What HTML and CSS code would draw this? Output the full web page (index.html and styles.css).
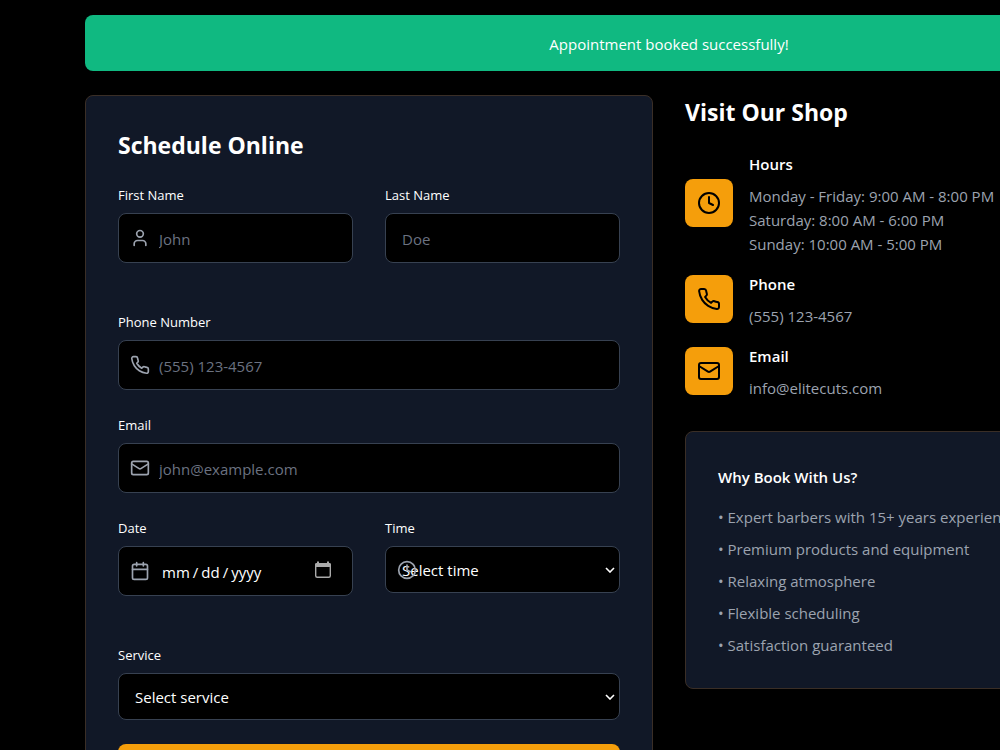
FILE: index.html
```html
<!DOCTYPE html>
<html lang="en">
<head>
<meta charset="utf-8">
<meta name="viewport" content="width=device-width, initial-scale=1">
<title>Book an Appointment</title>
<link rel="stylesheet" href="styles.css">
</head>
<body>
<svg class="sprite" aria-hidden="true">
  <symbol id="user" viewBox="0 0 24 24"><circle cx="12" cy="7" r="4"/><path d="M19 21v-2a4 4 0 0 0-4-4H9a4 4 0 0 0-4 4v2"/></symbol>
  <symbol id="phone" viewBox="0 0 24 24"><path d="M22 16.92v3a2 2 0 0 1-2.18 2 19.79 19.79 0 0 1-8.63-3.07 19.5 19.5 0 0 1-6-6 19.79 19.79 0 0 1-3.07-8.67A2 2 0 0 1 4.11 2h3a2 2 0 0 1 2 1.72 12.84 12.84 0 0 0 .7 2.81 2 2 0 0 1-.45 2.11L8.09 9.91a16 16 0 0 0 6 6l1.27-1.27a2 2 0 0 1 2.11-.45 12.84 12.84 0 0 0 2.81.7A2 2 0 0 1 22 16.92z"/></symbol>
  <symbol id="mail" viewBox="0 0 24 24"><rect x="2" y="4" width="20" height="16" rx="2"/><path d="m22 7-8.97 5.7a1.94 1.94 0 0 1-2.06 0L2 7"/></symbol>
  <symbol id="calendar" viewBox="0 0 24 24"><rect x="3" y="4" width="18" height="18" rx="2"/><path d="M8 2v4M16 2v4M3 10h18"/></symbol>
  <symbol id="clock" viewBox="0 0 24 24"><circle cx="12" cy="12" r="10"/><path d="M12 6v6l4 2"/></symbol>
</svg>
<main class="booking">
  <div class="alert" role="status">Appointment booked successfully!</div>
  <div class="columns">
    <form class="card form">
      <h2 class="title">Schedule Online</h2>
      <div class="row">
        <div class="field">
          <label class="label" for="first">First Name</label>
          <div class="control">
            <svg class="control-icon"><use href="#user"/></svg>
            <input class="input with-icon" id="first" type="text" placeholder="John">
          </div>
        </div>
        <div class="field">
          <label class="label" for="last">Last Name</label>
          <input class="input" id="last" type="text" placeholder="Doe">
        </div>
      </div>
      <div class="field">
        <label class="label" for="tel">Phone Number</label>
        <div class="control">
          <svg class="control-icon"><use href="#phone"/></svg>
          <input class="input with-icon" id="tel" type="tel" placeholder="(555) 123-4567">
        </div>
      </div>
      <div class="field">
        <label class="label" for="email">Email</label>
        <div class="control">
          <svg class="control-icon"><use href="#mail"/></svg>
          <input class="input with-icon" id="email" type="email" placeholder="john@example.com">
        </div>
      </div>
      <div class="row">
        <div class="field">
          <label class="label" for="date">Date</label>
          <div class="control">
            <svg class="control-icon"><use href="#calendar"/></svg>
            <input class="input with-icon date" id="date" type="date">
          </div>
        </div>
        <div class="field">
          <label class="label" for="time">Time</label>
          <div class="control">
            <svg class="control-icon"><use href="#clock"/></svg>
            <select class="input select" id="time"><option>Select time</option></select>
          </div>
        </div>
      </div>
      <div class="field">
        <label class="label" for="service">Service</label>
        <select class="input select" id="service"><option>Select service</option></select>
      </div>
      <button class="submit" type="submit">Book Appointment</button>
    </form>
    <section class="info">
      <h2 class="title">Visit Our Shop</h2>
      <div class="contacts">
        <div class="contact">
          <div class="badge"><svg class="badge-icon"><use href="#clock"/></svg></div>
          <div class="contact-text">
            <h3 class="subtitle">Hours</h3>
            <p class="muted">Monday - Friday: 9:00 AM - 8:00 PM<br>Saturday: 8:00 AM - 6:00 PM<br>Sunday: 10:00 AM - 5:00 PM</p>
          </div>
        </div>
        <div class="contact">
          <div class="badge"><svg class="badge-icon"><use href="#phone"/></svg></div>
          <div class="contact-text">
            <h3 class="subtitle">Phone</h3>
            <p class="muted">(555) 123-4567</p>
          </div>
        </div>
        <div class="contact">
          <div class="badge"><svg class="badge-icon"><use href="#mail"/></svg></div>
          <div class="contact-text">
            <h3 class="subtitle">Email</h3>
            <p class="muted">info@elitecuts.com</p>
          </div>
        </div>
      </div>
      <div class="card reasons">
        <h3 class="subtitle">Why Book With Us?</h3>
        <ul class="reason-list muted">
          <li>• Expert barbers with 15+ years experience</li>
          <li>• Premium products and equipment</li>
          <li>• Relaxing atmosphere</li>
          <li>• Flexible scheduling</li>
          <li>• Satisfaction guaranteed</li>
        </ul>
      </div>
    </section>
  </div>
</main>
</body>
</html>
```
FILE: styles.css
```css
* { box-sizing: border-box; }

body {
  margin: 0;
  background: #000;
  color: #fff;
  font-family: "Segoe UI", "Open Sans", "Noto Sans", sans-serif;
  font-size: 15px;
  line-height: 24px;
  overflow: hidden;
}

h2, h3, p, ul { margin: 0; padding: 0; }

.sprite { display: none; }

svg {
  fill: none;
  stroke: currentColor;
  stroke-width: 2;
  stroke-linecap: round;
  stroke-linejoin: round;
}

.booking {
  min-width: 1253px;
  padding: 15px 0 32px 85px;
  display: flex;
  flex-direction: column;
  gap: 24px;
}

.alert {
  padding: 17px 16px 15px;
  border-radius: 8px;
  background: #10b981;
  text-align: center;
}

.columns {
  display: grid;
  grid-template-columns: 1fr 1fr;
  gap: 32px;
  align-items: start;
}

.card {
  padding: 32px;
  border: 1px solid #3a2e26;
  border-radius: 8px;
  background: #111827;
}

.title {
  margin-bottom: 24px;
  padding-top: 3px;
  font-size: 23px;
  font-weight: 700;
  line-height: 29px;
}

.row {
  display: grid;
  grid-template-columns: 1fr 1fr;
  gap: 32px;
  margin-bottom: 24px;
}

.field { margin-bottom: 24px; }

.label {
  display: block;
  margin-bottom: 8px;
  padding-top: 2px;
  font-size: 13px;
  line-height: 19px;
}

.control { position: relative; }

.control-icon {
  position: absolute;
  left: 12px;
  top: 50%;
  width: 20px;
  height: 20px;
  margin-top: -10px;
  color: #9ca3af;
  pointer-events: none;
}

.input {
  display: block;
  width: 100%;
  height: 50px;
  padding: 2px 16px 0;
  border: 1px solid #374151;
  border-radius: 8px;
  background: #000;
  color: #fff;
  color-scheme: dark;
  font: inherit;
}

.input::placeholder { color: #6b7280; opacity: 1; }

.input.with-icon { padding-left: 40px; }

.date::-webkit-datetime-edit { padding-left: 2px; }

.date::-webkit-datetime-edit-text { padding: 0 2px; }

.date::-webkit-calendar-picker-indicator {
  width: 20px;
  height: 20px;
  margin-right: 3px;
  margin-bottom: 4px;
  padding: 0;
  background: url("data:image/svg+xml,%3Csvg xmlns='http://www.w3.org/2000/svg' viewBox='0 0 20 20'%3E%3Crect x='2.700' y='3.700' width='14.600' height='13.600' rx='1.500' fill='none' stroke='%23aaa' stroke-width='1.400'/%3E%3Cpath d='M2 4.500Q2 3 3.500 3H4V1.500h2V3h8V1.500h2V3h.5Q18 3 18 4.500V7H2z' fill='%23aaa'/%3E%3C/svg%3E") center / 20px no-repeat;
}

.input.select {
  height: 47px;
  padding: 0 16px;
  appearance: none;
  background: #000 url("data:image/svg+xml,%3Csvg xmlns='http://www.w3.org/2000/svg' viewBox='0 0 10 6'%3E%3Cpath d='M1 1l4 4 4-4' fill='none' stroke='white' stroke-width='1.600'/%3E%3C/svg%3E") right 4px center / 10px 6px no-repeat;
}

.submit {
  width: 100%;
  padding: 16px;
  border: 0;
  border-radius: 8px;
  background: #f59e0b;
  color: #000;
  font: inherit;
  font-weight: 600;
}

.contacts {
  display: flex;
  flex-direction: column;
  gap: 16px;
  margin-bottom: 32px;
}

.contact {
  display: flex;
  align-items: center;
  gap: 16px;
}

.contact-text {
  padding-top: 1px;
  margin-bottom: -1px;
}

.badge {
  display: flex;
  align-items: center;
  justify-content: center;
  width: 48px;
  height: 48px;
  border-radius: 8px;
  background: #f59e0b;
  color: #000;
}

.badge-icon { width: 24px; height: 24px; }

.subtitle {
  margin-bottom: 8px;
  font-size: 15px;
  font-weight: 600;
  line-height: 24px;
}

.muted { color: #9ca3af; }

.card.reasons { padding: 33px 32px 31px; }

.reasons .subtitle { margin-bottom: 16px; }

.reason-list {
  display: flex;
  flex-direction: column;
  gap: 8px;
  list-style: none;
}
```
